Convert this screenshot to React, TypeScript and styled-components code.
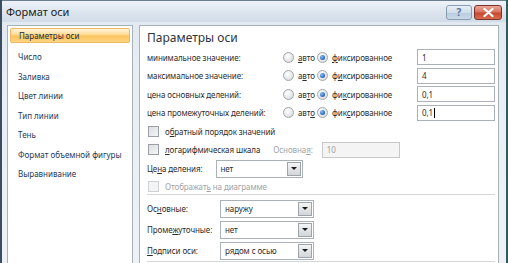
import styled, {createGlobalStyle} from "styled-components";

const GlobalStyle = createGlobalStyle`
  html, body {
    margin: 0;
    padding: 0;
    background: #ffffff;
  }
  body {
    font-family: "Noto Sans", "DejaVu Sans", sans-serif;
  }
`

type RowSpec = {
    label: string;
    auto: [string, string, string];
    fixed: [string, string, string];
    value: string;
    cursor?: boolean;
}

const rows: RowSpec[] = [
    {label: "минимальное значение:", auto: ["", "а", "вто"], fixed: ["", "ф", "иксированное"], value: "1"},
    {label: "максимальное значение:", auto: ["а", "в", "то"], fixed: ["ф", "и", "ксированное"], value: "4"},
    {label: "цена основных делений:", auto: ["ав", "т", "о"], fixed: ["фи", "к", "сированное"], value: "0,1"},
    {label: "цена промежуточных делений:", auto: ["авт", "о", ""], fixed: ["фик", "с", "ированное"], value: "0,1", cursor: true},
]

const navItems = [
    "Параметры оси",
    "Число",
    "Заливка",
    "Цвет линии",
    "Тип линии",
    "Тень",
    "Формат объемной фигуры",
    "Выравнивание",
]

const Underlined = (props: { parts: [string, string, string] }) => (
    <span>
        {props.parts[0]}<Key>{props.parts[1]}</Key>{props.parts[2]}
    </span>
)

const App = () => {
    return (
        <>
            <GlobalStyle/>
            <Window>
                <TitleBar>
                    <Title>Формат оси</Title>
                    <TitleButtons>
                        <HelpButton>?</HelpButton>
                        <CloseButton>
                            <svg width="11" height="9" viewBox="0 0 11 9">
                                <path d="M1.5 1 L9.5 8 M9.5 1 L1.5 8" stroke="#ffffff" strokeWidth="2.2"
                                      strokeLinecap="round"/>
                            </svg>
                        </CloseButton>
                    </TitleButtons>
                </TitleBar>
                <Body>
                    <Nav>
                        {navItems.map((item, i) => (
                            <NavItem key={item} $active={i == 0}>{item}</NavItem>
                        ))}
                    </Nav>
                    <Panel>
                        <Heading>Параметры оси</Heading>
                        {rows.map(row => (
                            <ValueRow key={row.label}>
                                <Label>{row.label}</Label>
                                <Option>
                                    <Radio/>
                                    <Underlined parts={row.auto}/>
                                </Option>
                                <Option>
                                    <Radio $checked/>
                                    <Underlined parts={row.fixed}/>
                                </Option>
                                <TextBox>
                                    {row.value}
                                    {row.cursor && <Caret/>}
                                </TextBox>
                            </ValueRow>
                        ))}
                        <CheckRow>
                            <CheckBox/>
                            <span>о<Key>б</Key>ратный порядок значений</span>
                        </CheckRow>
                        <CheckRow>
                            <CheckBox/>
                            <span><Key>л</Key>огарифмическая шкала</span>
                            <BaseLabel>Основна<Key>я</Key>:</BaseLabel>
                            <TextBox $disabled $width={78}>10</TextBox>
                        </CheckRow>
                        <UnitRow>
                            <span>Це<Key>н</Key>а деления:</span>
                            <Combo $width={87}>
                                <ComboText>нет</ComboText>
                                <DropButton/>
                            </Combo>
                        </UnitRow>
                        <CheckRow $disabled $short>
                            <CheckBox $disabled/>
                            <span>Отображат<Key>ь</Key> на диаграмме</span>
                        </CheckRow>
                        <Separator $after={3}/>
                        <TickRow>
                            <TickLabel>Ос<Key>н</Key>овные:</TickLabel>
                            <Combo $width={94}>
                                <ComboText>наружу</ComboText>
                                <DropButton/>
                            </Combo>
                        </TickRow>
                        <TickRow>
                            <TickLabel>Проме<Key>ж</Key>уточные:</TickLabel>
                            <Combo $width={94}>
                                <ComboText>нет</ComboText>
                                <DropButton/>
                            </Combo>
                        </TickRow>
                        <TickRow>
                            <TickLabel><Key>П</Key>одписи оси:</TickLabel>
                            <Combo $width={94}>
                                <ComboText>рядом с осью</ComboText>
                                <DropButton/>
                            </Combo>
                        </TickRow>
                        <Separator $after={0}/>
                    </Panel>
                </Body>
            </Window>
        </>
    )
}

const Window = styled.div`
  width: 508px;
  height: 263px;
  overflow: hidden;
  display: flex;
  flex-direction: column;
  box-sizing: border-box;
  border-left: 2px solid #3b4d5e;
  border-right: 2px solid #2f5a5e;
  background: linear-gradient(180deg, #dfe7ef 0%, #e8eef4 30%, #eef2f6 100%);
`

const TitleBar = styled.div`
  height: 22px;
  box-sizing: border-box;
  flex-shrink: 0;
  display: flex;
  align-items: center;
  justify-content: space-between;
  padding: 0 4px 0 4px;
  background: linear-gradient(180deg, #eef3f8 0%, #dde6ef 50%, #d1dce8 100%);
  border-top: 1px solid #6c7d8e;
`

const Title = styled.div`
  font-size: 11px;
  color: #1b1b1b;
`

const TitleButtons = styled.div`
  display: flex;
  gap: 2px;
  align-items: flex-start;
  margin-top: 1px;
`

const HelpButton = styled.div`
  width: 26px;
  height: 15px;
  box-sizing: border-box;
  border: 1px solid #8a9cb0;
  border-radius: 3px;
  background: linear-gradient(180deg, #e8eff7 0%, #cfdcea 50%, #b9cbde 51%, #c9d9ea 100%);
  color: #5a7390;
  font-size: 10px;
  font-weight: bold;
  line-height: 13px;
  text-align: center;
`

const CloseButton = styled.div`
  width: 28px;
  height: 15px;
  box-sizing: border-box;
  border: 1px solid #7a3328;
  border-radius: 3px;
  background: linear-gradient(180deg, #eaa898 0%, #d97560 45%, #c6482f 55%, #da6d4f 100%);
  display: flex;
  align-items: center;
  justify-content: center;
`

const Body = styled.div`
  flex: 1;
  min-height: 0;
  display: flex;
  gap: 6px;
  padding: 3px 7px 0 5px;
`

const Nav = styled.div`
  width: 126px;
  flex-shrink: 0;
  box-sizing: border-box;
  background: #ffffff;
  border: 1px solid #a8b0b8;
  border-bottom: none;
  padding: 2px 2px 0 2px;
  display: flex;
  flex-direction: column;
`

const NavItem = styled.div<{ $active?: boolean }>`
  height: 19.5px;
  flex-shrink: 0;
  box-sizing: border-box;
  padding-left: 8px;
  display: flex;
  align-items: center;
  font-size: 8px;
  color: #23395a;
  white-space: nowrap;
  border-radius: 2px;
  ${p => p.$active && `
    height: 15px;
    margin-bottom: 4px;
    border: 1px solid #f0b860;
    background: linear-gradient(180deg, #fff3d9 0%, #fedf9c 40%, #fcc35e 55%, #fdd585 100%);
    color: #1d2a3a;
  `}
`

const Panel = styled.div`
  flex: 1;
  box-sizing: border-box;
  background: #ffffff;
  border: 1px solid #a8b0b8;
  border-bottom: none;
  padding: 4px 3px 0 7px;
  display: flex;
  flex-direction: column;
`

const Heading = styled.div`
  font-size: 12px;
  color: #2e3640;
  line-height: 16px;
  margin-bottom: 2px;
`

const ValueRow = styled.div`
  display: grid;
  grid-template-columns: 136px 34px 100px 78px;
  align-items: center;
  height: 18.5px;
  flex-shrink: 0;
  font-size: 8px;
  letter-spacing: -0.1px;
  color: #2d2d2d;
`

const Label = styled.div`
  white-space: nowrap;
`

const Option = styled.div`
  display: flex;
  align-items: center;
  gap: 4px;
  white-space: nowrap;
`

const Key = styled.u`
  text-underline-offset: 1px;
`

const Radio = styled.span<{ $checked?: boolean }>`
  width: 9px;
  height: 9px;
  flex-shrink: 0;
  border-radius: 50%;
  border: 1px solid #a2a8ae;
  background: radial-gradient(circle at 40% 35%, #ffffff 0%, #e4e6e8 60%, #cfd3d6 100%);
  position: relative;
  ${p => p.$checked && `
    &::after {
      content: "";
      position: absolute;
      left: 2px;
      top: 2px;
      width: 5px;
      height: 5px;
      border-radius: 50%;
      background: radial-gradient(circle at 35% 35%, #8fc0f0 0%, #2f6fc0 60%, #1b4f90 100%);
    }
  `}
`

const TextBox = styled.div<{ $disabled?: boolean; $width?: number }>`
  ${p => p.$width ? `width: ${p.$width}px;` : ``}
  height: 16px;
  box-sizing: border-box;
  border: 1px solid ${p => p.$disabled ? "#c6c9cc" : "#aab1b8"};
  background: ${p => p.$disabled ? "#f4f4f4" : "#ffffff"};
  color: ${p => p.$disabled ? "#a0a0a0" : "#2d2d2d"};
  padding-left: 4px;
  font-size: 8px;
  display: flex;
  align-items: center;
`

const Caret = styled.span`
  width: 1px;
  height: 10px;
  margin-left: 1px;
  background: #000000;
`

const CheckRow = styled.div<{ $disabled?: boolean; $short?: boolean }>`
  display: flex;
  align-items: center;
  gap: 6px;
  height: ${p => p.$short ? 16 : 18.5}px;
  flex-shrink: 0;
  font-size: 8px;
  letter-spacing: -0.1px;
  color: ${p => p.$disabled ? "#a3a3a3" : "#2d2d2d"};
  white-space: nowrap;
`

const CheckBox = styled.span<{ $disabled?: boolean }>`
  width: 9px;
  height: 9px;
  flex-shrink: 0;
  margin-left: 1px;
  border: 1px solid ${p => p.$disabled ? "#cfd2d5" : "#9aa0a6"};
  background: ${p => p.$disabled ? "#f4f4f4" : "linear-gradient(135deg, #dcdfe2 0%, #f4f5f6 100%)"};
`

const BaseLabel = styled.span`
  color: #a3a3a3;
  margin-left: 7px;
  margin-right: 3px;
`

const UnitRow = styled.div`
  display: flex;
  align-items: center;
  gap: 13px;
  height: 19px;
  flex-shrink: 0;
  font-size: 8px;
  letter-spacing: -0.1px;
  color: #2d2d2d;
  white-space: nowrap;
`

const Combo = styled.div<{ $width: number }>`
  width: ${p => p.$width}px;
  height: 18px;
  box-sizing: border-box;
  border: 1px solid #aab1b8;
  background: #ffffff;
  display: flex;
  align-items: stretch;
`

const ComboText = styled.div`
  flex: 1;
  padding-left: 4px;
  font-size: 8px;
  color: #2d2d2d;
  display: flex;
  align-items: center;
  white-space: nowrap;
`

const DropButton = styled.div`
  width: 14px;
  margin: 1px;
  box-sizing: border-box;
  border: 1px solid #9ea4aa;
  background: linear-gradient(180deg, #f4f5f6 0%, #e2e4e6 50%, #d3d6d9 100%);
  display: flex;
  align-items: center;
  justify-content: center;

  &::after {
    content: "";
    border-left: 3px solid transparent;
    border-right: 3px solid transparent;
    border-top: 3px solid #1a1a1a;
  }
`

const Separator = styled.div<{ $after: number }>`
  height: 1px;
  flex-shrink: 0;
  margin: 0 0 ${p => p.$after}px 0;
  background: #d4d7da;
`

const TickRow = styled.div`
  display: flex;
  align-items: center;
  height: 21px;
  flex-shrink: 0;
  font-size: 8px;
  letter-spacing: -0.1px;
  color: #2d2d2d;
  white-space: nowrap;
`

const TickLabel = styled.div`
  width: 73px;
`

export default App;
